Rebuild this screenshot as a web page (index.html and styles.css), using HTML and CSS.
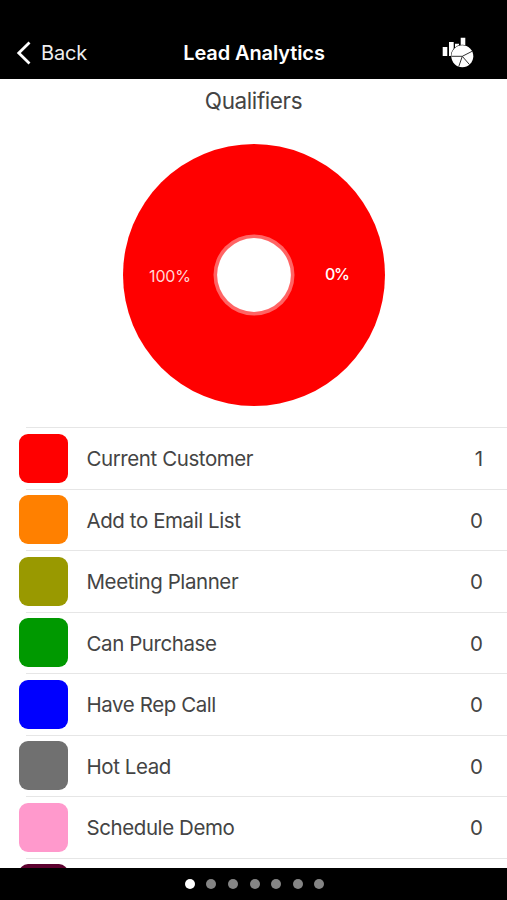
FILE: index.html
```html
<!DOCTYPE html>
<html lang="en">
<head>
<meta charset="utf-8">
<title>Lead Analytics</title>
<link rel="stylesheet" href="styles.css">
</head>
<body>
<div class="app">
  <header class="navbar">
    <a class="back">
      <svg class="chevron" width="16" height="26" viewBox="0 0 16 26"><path d="M14.5 2.6 3.8 13l10.7 10.4" fill="none" stroke="#fff" stroke-width="2.8"/></svg>
      <span class="back-label">Back</span>
    </a>
    <h1 class="title">Lead Analytics</h1>
    <svg class="chart-icon" width="34" height="34" viewBox="0 0 34 34">
      <path d="M2.7 12h4.6v9H2.7zM9 7h4.7v14H9zM15 8.7h4V18h-4zM20.7 2.8h4.6V14h-4.6z" fill="#fff"/>
      <circle cx="22.3" cy="21.3" r="11.5" fill="#000"/>
      <circle cx="22.3" cy="21.3" r="11" fill="#fff"/>
      <path d="M11.3 21.3h11l9.8-5M22.3 21.3l-3.6 10.4M22.3 21.3l7.2 8.3" fill="none" stroke="#333" stroke-width="1"/>
    </svg>
  </header>
  <main class="content">
    <h2 class="heading">Qualifiers</h2>
    <svg class="donut" width="264" height="264" viewBox="0 0 264 264">
      <circle cx="132" cy="132" r="131" fill="#f00"/>
      <circle cx="132" cy="132" r="40.5" fill="#ff6464"/>
      <circle cx="132" cy="132" r="36.9" fill="#fff"/>
      <text class="slice" x="27" y="139.3" textLength="42">100%</text>
      <text class="slice strong" x="203" y="137.3" textLength="25">0%</text>
    </svg>
    <ul class="list">
      <li class="row"><i class="swatch red"></i><span class="name">Current Customer</span><span class="count">1</span></li>
      <li class="row"><i class="swatch orange"></i><span class="name">Add to Email List</span><span class="count">0</span></li>
      <li class="row"><i class="swatch olive"></i><span class="name">Meeting Planner</span><span class="count">0</span></li>
      <li class="row"><i class="swatch green"></i><span class="name">Can Purchase</span><span class="count">0</span></li>
      <li class="row"><i class="swatch blue"></i><span class="name">Have Rep Call</span><span class="count">0</span></li>
      <li class="row"><i class="swatch gray"></i><span class="name">Hot Lead</span><span class="count">0</span></li>
      <li class="row"><i class="swatch pink"></i><span class="name">Schedule Demo</span><span class="count">0</span></li>
      <li class="row"><i class="swatch maroon"></i></li>
    </ul>
  </main>
  <footer class="pager">
    <i class="dot active"></i><i class="dot"></i><i class="dot"></i><i class="dot"></i><i class="dot"></i><i class="dot"></i><i class="dot"></i>
  </footer>
</div>
</body>
</html>
```
FILE: styles.css
```css
* { box-sizing: border-box; }
body { margin: 0; background: #fff; color: #444; font-family: Inter, "Liberation Sans", sans-serif; }
.app { height: 900px; display: flex; flex-direction: column; overflow: hidden; }
.navbar {
  flex: none; height: 79px; padding: 26px 33px 0 15px; background: #000; color: #fff;
  display: grid; grid-template-columns: 120px 1fr 120px; align-items: center;
}
.back { display: flex; align-items: center; gap: 10px; }
.chevron { flex: none; }
.back-label { font-size: 20px; line-height: 26px; letter-spacing: -0.2px; color: #eee; }
.title { margin: 0 0 0 19px; text-align: center; font-size: 20px; font-weight: 600; line-height: 26px; letter-spacing: -0.1px; white-space: nowrap; }
.chart-icon { justify-self: end; margin-top: -1px; }
.content { flex: 1; min-height: 0; overflow: hidden; display: flex; flex-direction: column; }
.heading { flex: none; margin: 7px 0 0; text-align: center; font-size: 22.5px; font-weight: 400; line-height: 30px; letter-spacing: -0.4px; }
.donut { flex: none; align-self: center; margin: 26.5px 0 0 1px; }
.slice { font-size: 16px; fill: #ffd6d6; }
.strong { font-weight: 500; fill: #fff; }
.list { flex: none; list-style: none; margin: 20.5px 0 0; padding: 0; }
.row {
  height: 61.5px; padding: 1px 24px 0 19px; display: flex; align-items: center;
  background: linear-gradient(#e6e6e6, #e6e6e6) 26px 0 / 100% 1px no-repeat;
}
.swatch { flex: none; width: 49px; height: 49px; border-radius: 9px; }
.name { flex: 1; margin: 1px 0 0 18.5px; font-size: 20.5px; letter-spacing: -0.42px; }
.count { margin-top: 1px; font-size: 20.5px; }
.red { background: #f00; }
.orange { background: #ff8000; }
.olive { background: #999900; }
.green { background: #009900; }
.blue { background: #00f; }
.gray { background: #707070; }
.pink { background: #ff99cc; }
.maroon { background: #5c002e; }
.pager { flex: none; height: 32px; padding-left: 2px; background: #000; display: flex; justify-content: center; align-items: center; gap: 11.6px; }
.dot { width: 10px; height: 10px; border-radius: 50%; background: #858585; }
.active { background: #fff; }
```
